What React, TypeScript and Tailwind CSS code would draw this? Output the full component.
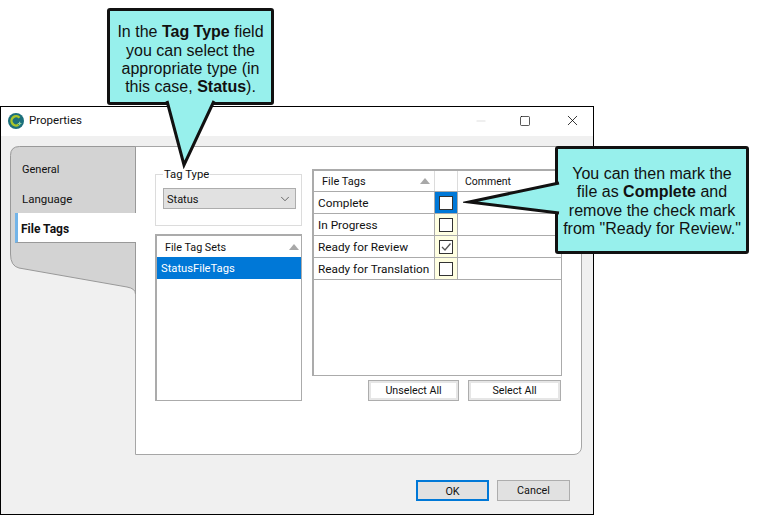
import { Minus, Square, X, ChevronDown } from 'lucide-react'

const tagRows = [
  { name: 'Complete', checked: false, active: true },
  { name: 'In Progress', checked: false, active: false },
  { name: 'Ready for Review', checked: true, active: false },
  { name: 'Ready for Translation', checked: false, active: false },
]

const SortArrow = () => (
  <svg width="10" height="6" viewBox="0 0 10 6" className="shrink-0">
    <path d="M5 0L10 6H0Z" fill="#a8a8a8" />
  </svg>
)

const AppLogo = () => (
  <svg width="16" height="16" viewBox="0 0 16 16">
    <circle cx="8" cy="8" r="8" fill="#1b6f7c" />
    <path d="M11.5 4.8A4.6 4.6 0 1 0 10.5 11.8" fill="none" stroke="#a9c62c" strokeWidth="2.4" />
    <path d="M9.8 10.5h3.6M11.6 8.7v3.6" stroke="#8fd0a0" strokeWidth="1.2" />
  </svg>
)

const TabBackground = () => (
  <svg width="126" height="150" viewBox="0 0 126 150" className="absolute left-0 top-0">
    <path
      d="M125.5 0.5H9.5Q0.5 0.5 0.5 9.5V108Q0.5 120 9 122L117 141Q125.5 142.5 125.5 148V0.5Z"
      fill="#d3d3d3"
      stroke="#999999"
    />
  </svg>
)

const DialogButton = ({ label, focused }: { label: string; focused?: boolean }) => (
  <button
    className={`h-[21px] w-[73px] bg-[#e1e1e1] pt-[2px] text-center ${
      focused ? 'border-2 border-[#0078d7]' : 'border border-[#adadad]'
    }`}
  >
    {label}
  </button>
)

const SmallButton = ({ label, width }: { label: string; width: string }) => (
  <button className={`h-[21px] ${width} border border-[#adadad] bg-white pt-[1px] text-center text-[10.7px] shadow-[inset_0_0_0_2px_#e6e6e6]`}>
    {label}
  </button>
)

export default function App() {
  return (
    <div className="relative h-[515px] w-[758px] overflow-hidden bg-white font-['Roboto','Noto_Sans',sans-serif] text-[11px] text-[#111]">
      <div className="mt-[106px] flex h-[409px] w-[594px] flex-col border border-black">
        {/* title bar */}
        <div className="flex h-[29px] shrink-0 items-center bg-white pb-[2px] pl-[7px]">
          <AppLogo />
          <span className="ml-[5px] text-[11.5px]">Properties</span>
          <div className="ml-auto flex items-center">
            <Minus size={14} strokeWidth={1} className="mr-[31px] text-[#c8c8c8]" />
            <Square size={12} strokeWidth={1.3} className="mr-[33px] text-black" />
            <X size={17} strokeWidth={1.1} className="mr-[12px] text-black" />
          </div>
        </div>

        <div className="flex flex-1 flex-col bg-[#f0f0f0]">
          <div className="flex h-[319px] shrink-0 pl-[9px] pr-[11px] pt-[10px]">
            {/* tabs */}
            <div className="relative h-[150px] w-[126px] shrink-0">
              <TabBackground />
              <div className="relative flex flex-col pt-[8px]">
                <div className="flex h-[30px] items-center pl-[12px] pt-[2px]">General</div>
                <div className="flex h-[29px] items-center pl-[12px] pt-[2px] text-[11.5px]">Language</div>
                <div className="ml-[5px] flex h-[30px] w-[121px] items-center border-b border-b-[#999] border-l-[3px] border-l-[#73b4e8] bg-white pl-[3px] pt-[2px] text-[12px] font-bold">
                  File Tags
                </div>
              </div>
            </div>

            {/* main panel */}
            <div className="-ml-px flex h-[309px] flex-1 gap-[10px] rounded-br-[8px] border border-[#a6a6a6] bg-white pl-[19px] pr-[19px] pt-[22px]">
              <div className="flex w-[147px] shrink-0 flex-col gap-[8px] pt-[5px]">
                <div className="h-[52px] border border-[#dcdcdc]">
                  <div className="relative -top-[7px] left-[7px] w-fit bg-white px-[1px] text-[11.3px] leading-[14px]">Tag Type</div>
                  <div className="ml-[7px] mr-[5px] -mt-[1px] flex h-[21px] items-center justify-between border border-[#adadad] bg-[#e1e1e1] pl-[3px] pr-[3px]">
                    <span className="pt-[3px]">Status</span>
                    <ChevronDown size={14} strokeWidth={1.2} className="text-[#333]" />
                  </div>
                </div>
                <div className="h-[167px] border-2 border-[#ababab] border-b-1 border-r-1 bg-white">
                  <div className="flex h-[21px] items-center justify-between pl-[8px] pr-[2px] text-[10.8px]">
                    <span className="pt-[3px]">File Tag Sets</span>
                    <SortArrow />
                  </div>
                  <div className="flex h-[22px] items-center bg-[#0078d7] pl-[4px] pt-[3px] text-[11.2px] text-white">StatusFileTags</div>
                </div>
              </div>

              <div className="flex w-[250px] shrink-0 flex-col">
                <div className="h-[207px] border-2 border-[#ababab] border-b-1 border-r-1 bg-white">
                  <div className="flex h-[21px] border-b border-[#ababab]">
                    <div className="flex w-[121px] items-center justify-between border-r border-[#dcdcdc] pl-[8px] pr-[4px]">
                      <span className="pt-[2px]">File Tags</span>
                      <SortArrow />
                    </div>
                    <div className="w-[23px] border-r border-[#dcdcdc]" />
                    <div className="flex items-center pl-[7px] pt-[2px] text-[10.5px]">Comment</div>
                  </div>
                  {tagRows.map((row) => (
                    <div key={row.name} className="flex h-[22px] w-[247px] border-b border-[#ababab]">
                      <div className="flex w-[121px] items-center border-r border-[#ababab] pl-[4px] pt-[2px] text-[11.8px]">{row.name}</div>
                      <div
                        className={`flex w-[23px] items-center justify-center border-r border-[#ababab] ${
                          row.active ? 'bg-[#0078d7]' : 'bg-[#ffffe1]'
                        }`}
                      >
                        <div className="flex h-[14px] w-[14px] items-center justify-center border border-[#333] bg-white">
                          {row.checked && (
                            <svg width="12" height="12" viewBox="0 0 12 12">
                              <path d="M2 6L5 9L10.5 2.5" fill="none" stroke="#555" strokeWidth="1.3" />
                            </svg>
                          )}
                        </div>
                      </div>
                    </div>
                  ))}
                </div>
                <div className="mt-[4px] flex justify-end gap-[9px] pr-[1px]">
                  <SmallButton label="Unselect All" width="w-[91px]" />
                  <SmallButton label="Select All" width="w-[93px]" />
                </div>
              </div>
            </div>
          </div>

          <div className="flex justify-end gap-[8px] pr-[23px] pt-[25px] text-[10.8px]">
            <DialogButton label="OK" focused />
            <DialogButton label="Cancel" />
          </div>
        </div>
      </div>

      {/* callouts */}
      <div className="absolute left-[107px] top-[8px] flex h-[97px] w-[167px] items-center justify-center rounded-[3px] border-[3px] border-[#111] bg-[#97f0ec] pt-[7px] text-center font-['Liberation_Sans',sans-serif] text-[16px] leading-[18.4px]">
        <p>
          In the <b>Tag Type</b> field
          <br />
          you can select the
          <br />
          appropriate type (in
          <br />
          this case, <b>Status</b>).
        </p>
        <svg width="56" height="70" viewBox="0 0 56 70" className="absolute left-[54px] top-[88px]">
          <path d="M3 2L20 66L50 2" fill="#97f0ec" stroke="#111" strokeWidth="3" strokeLinejoin="miter" />
        </svg>
      </div>
      <div className="absolute left-[555px] top-[146px] flex h-[108px] w-[194px] items-center justify-center rounded-[3px] border-[3px] border-[#111] bg-[#97f0ec] pt-[3px] text-center font-['Liberation_Sans',sans-serif] text-[16px] leading-[18.4px]">
        <p className="whitespace-nowrap">
          You can then mark the
          <br />
          file as <b>Complete</b> and
          <br />
          remove the check mark
          <br />
          from "Ready for Review."
        </p>
        <svg width="100" height="40" viewBox="0 0 100 40" className="absolute -left-[95px] top-[32px]">
          <path d="M96 2L6 21L96 32" fill="#97f0ec" stroke="#111" strokeWidth="3" strokeMiterlimit="12" />
        </svg>
      </div>
    </div>
  )
}
